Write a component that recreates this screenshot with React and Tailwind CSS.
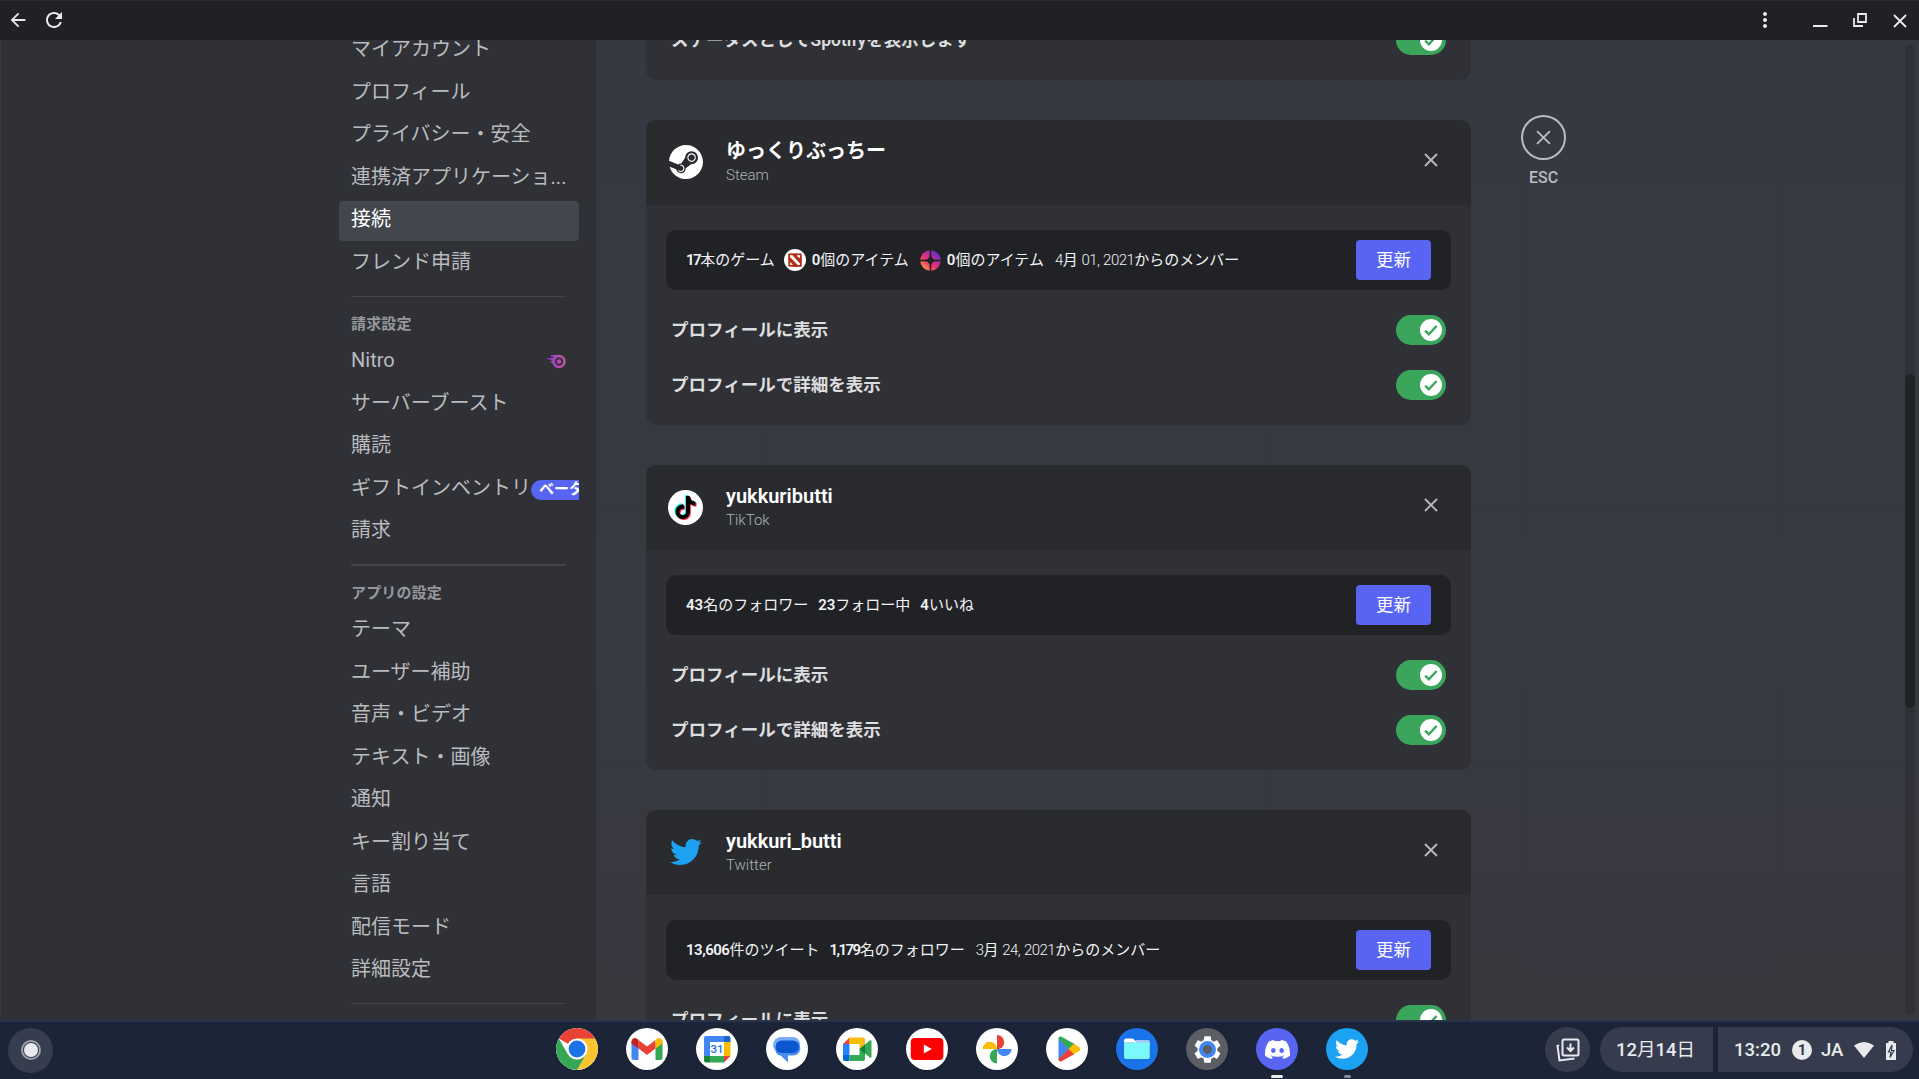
import React from "react";
import { SiSteam, SiTiktok, SiDiscord } from "react-icons/si";
import { FaTwitter } from "react-icons/fa";
import { MdArrowBack, MdRefresh, MdMoreVert, MdSettings } from "react-icons/md";

const account = ["マイアカウント", "プロフィール", "プライバシー・安全", "連携済アプリケーショ...", "接続", "フレンド申請"];
const app = ["テーマ", "ユーザー補助", "音声・ビデオ", "テキスト・画像", "通知", "キー割り当て", "言語", "配信モード", "詳細設定"];

function Item({ children, active, extra }) {
  return (
    <div className={"mb-[2.5px] flex h-10 shrink-0 items-center overflow-hidden rounded pl-[12px] text-[20px] leading-[25px] " + (active ? "bg-[#42464d] text-white" : "text-[#b9bbbe]")}>
      <span className="shrink-0 whitespace-nowrap pb-[3px]">{children}</span>
      {extra}
    </div>
  );
}

function Divider() {
  return <div className="ml-[12px] mr-[13px] mb-[10.5px] mt-[9.5px] h-[1.25px] shrink-0 bg-[#42444a]" />;
}

function Heading({ children }) {
  return <div className="h-[35px] shrink-0 px-[12px] pt-[7px] text-[15px] font-bold leading-[20px] tracking-[0.15px] text-[#96989d]">{children}</div>;
}

function NitroIcon() {
  return (
    <svg className="mb-px ml-auto mr-[13px] h-[15px] w-[19px] shrink-0" viewBox="0 0 19 15">
      <defs>
        <linearGradient id="nitro" x1="0" x2="19" y1="0" y2="0" gradientUnits="userSpaceOnUse"><stop offset="0" stopColor="#7a47c6" /><stop offset=".5" stopColor="#b845c1" /><stop offset="1" stopColor="#ab5d8a" /></linearGradient>
      </defs>
      <g fill="none" stroke="url(#nitro)">
        <circle cx="12" cy="7.500" r="5.500" strokeWidth="2.700" />
        <path d="M4 1.800h8M2 4.800h5.500M3.500 7.700h4" strokeWidth="1.700" />
        <path d="M0 4.810h1.200" strokeWidth="1.500" />
      </g>
      <circle cx="12" cy="7.500" r="2.300" fill="#b845b9" />
    </svg>
  );
}

function Cross({ className }) {
  return (
    <svg className={className} viewBox="0 0 14 14" fill="none" stroke="currentColor" strokeWidth="1.8"><path d="M1 1l12 12M13 1L1 13" /></svg>
  );
}

function Toggle() {
  return (
    <div className="flex h-[30px] w-[50px] items-center justify-end rounded-full bg-[#3ba55c] pr-1">
      <div className="flex h-[22.5px] w-[22.5px] items-center justify-center rounded-full bg-white">
        <svg className="h-[14px] w-[14px]" viewBox="0 0 14 14" fill="none" stroke="#3ba55c" strokeWidth="2.4"><path d="M1.2 7.6l3.600 3.700L12.600 3" /></svg>
      </div>
    </div>
  );
}

function ToggleRow({ label }) {
  return (
    <div className="mb-[25px] flex h-[30px] items-center justify-between pl-[5px] pr-[5px] text-[17.5px] font-semibold text-[#dcddde]">
      <span className="whitespace-nowrap">{label}</span>
      <Toggle />
    </div>
  );
}

function Card({ icon, name, service, children }) {
  return (
    <section className="mb-10 h-[305px] shrink-0 overflow-hidden rounded-[10px] bg-[#303136]">
      <header className="flex h-[85px] items-center bg-[#2a2b2f] pl-[22px] pr-[33px]">
        <div className="mb-[1px] flex h-[35px] w-[35px] items-center justify-center">{icon}</div>
        <div className="ml-[23px] flex grow flex-col pb-[2px]">
          <div className="text-[20px] font-semibold leading-[26px] text-white">{name}</div>
          <div className="text-[15px] font-light leading-[22px] text-[#b0b3b7]">{service}</div>
        </div>
        <Cross className="mb-[5px] h-[14px] w-[14px] text-[#b9bbbe]" />
      </header>
      <div className="px-5 pt-[25px]">
        <div className="mb-[25px] flex h-[60px] items-center rounded-[10px] bg-[#212226] px-5 text-[15px] text-[#f2f3f5]">
          <div className="flex grow items-center gap-[10px] whitespace-nowrap">{children}</div>
          <button className="h-10 w-[75px] rounded bg-[#5865f2] text-[17.5px] text-white">更新</button>
        </div>
        <ToggleRow label="プロフィールに表示" />
        <ToggleRow label="プロフィールで詳細を表示" />
      </div>
    </section>
  );
}

function Stat({ n, children, icon, fit = "" }) {
  return (
    <span className="flex items-center">
      {icon}
      <b className={"font-semibold " + fit}>{n}</b>
      {children}
    </span>
  );
}

function Since({ month, date }) {
  return (
    <span className="ml-px">
      <span className="font-light tracking-[-0.5px]">{month}</span>月<span className="font-light tracking-[-0.5px] [word-spacing:0.5px]">{" " + date}</span>からのメンバー
    </span>
  );
}

function DotaIcon() {
  return (
    <svg className="-ml-px mr-[6px] h-[22px] w-[22px]" viewBox="0 0 22 22">
      <circle cx="11" cy="11" r="11" fill="#fff" />
      <path d="M4.200 4.600l6.600-.400 6.800.200.300 6.600-.200 6.700-6.700.200-6.600-.300-.200-6.600z" fill="#b0301c" />
      <path d="M6 6l2.400.200 7.600 8.200-.200 1.600-2 .100L6.200 8.200zM13.200 6l2.800.200v2.900l-2.600-1.300zM6.200 12.800l2.700 3.100-2.700.200z" fill="#fff" />
    </svg>
  );
}

function TfIcon() {
  return (
    <svg className="mr-[6px] ml-px h-[21px] w-[21px]" viewBox="0 0 21 21">
      <defs>
        <linearGradient id="tf" x1=".9" y1=".05" x2=".1" y2=".95"><stop offset="0" stopColor="#4a2fd8" /><stop offset=".45" stopColor="#d62a8c" /><stop offset=".65" stopColor="#f03e6c" /><stop offset="1" stopColor="#f8a83f" /></linearGradient>
      </defs>
      <circle cx="10.500" cy="10.500" r="10.300" fill="url(#tf)" />
      <path d="M9.800 0h1.400l.3 7 2.500 2.500 7 .3v1.400l-7 .3-2.500 2.500-.3 7H9.800l-.3-7L7 11.500l-7-.3V9.800l7-.3L9.500 7z" fill="#212226" />
    </svg>
  );
}

function TikTok() {
  return (
    <div className="grid h-[35px] w-[35px] place-items-center rounded-full bg-white">
      <SiTiktok className="col-start-1 row-start-1 mr-[2px] mb-[1px] h-[23px] w-[23px] text-[#25f4ee]" />
      <SiTiktok className="col-start-1 row-start-1 ml-[2px] mt-[2px] h-[23px] w-[23px] text-[#fe2c55]" />
      <SiTiktok className="col-start-1 row-start-1 h-[23px] w-[23px] text-black" />
    </div>
  );
}

function Disc({ bg = "bg-white", children, mark }) {
  return (
    <div className="flex w-[42px] flex-col items-center pt-[8px]">
      <div className={"flex h-[42px] w-[42px] shrink-0 items-center justify-center overflow-hidden rounded-full shadow " + bg}>{children}</div>
      {mark && <div className={"mt-[5px] h-[3px] shrink-0 rounded-full " + mark} />}
    </div>
  );
}

const S = ({ children }) => <svg className="h-[42px] w-[42px]" viewBox="0 0 42 42">{children}</svg>;

function Dock() {
  return (
    <div className="flex gap-7">
      <Disc><S>
        <path d="M21 21L2.800 10.500A21 21 0 0 1 39.200 10.500z" fill="#ea4335" />
        <path d="M21 10.500H39.200A21 21 0 0 1 21 42L30.100 26.200z" fill="#fbc430" />
        <path d="M2.800 10.500A21 21 0 0 0 21 42L30.100 26.200 11.900 26.200z" fill="#34a853" />
        <circle cx="21" cy="21" r="10.500" fill="#fff" /><circle cx="21" cy="21" r="8.400" fill="#1a73e8" />
      </S></Disc>
      <Disc><S>
        <path d="M5.500 13v17a2 2 0 0 0 2 2h5V17z" fill="#4285f4" />
        <path d="M36.500 13v17a2 2 0 0 1-2 2h-5V17z" fill="#34a853" />
        <path d="M12.500 12l8.500 6.500 8.500-6.500v8.500L21 27l-8.500-6.500z" fill="#ea4335" />
        <path d="M5.500 14v1.500l7 5V12l-1.500-1.200c-2.400-1.700-5.500-.1-5.500 3.200z" fill="#c5221f" />
        <path d="M36.500 14v1.500l-7 5V12l1.500-1.200c2.400-1.700 5.500-.1 5.500 3.200z" fill="#fbbc04" />
      </S></Disc>
      <Disc><S>
        <rect x="14" y="14" width="14" height="14" fill="#fff" />
        <path d="M8 10a2 2 0 0 1 2-2h18v6H14v14H8z" fill="#4285f4" />
        <path d="M28 8h4.500a2 2 0 0 1 2 2v4H28z" fill="#1967d2" />
        <path d="M28 14h6.500v14H28z" fill="#fbbc04" />
        <path d="M14 28h14v6.500H14z" fill="#34a853" />
        <path d="M8 28h6v6.500h-4a2 2 0 0 1-2-2z" fill="#188038" />
        <path d="M28 28h6.500L28 34.500z" fill="#ea4335" />
        <text x="21" y="25.300" textAnchor="middle" fontFamily="Roboto" fontWeight="500" fontSize="11.500" fill="#1a73e8">31</text>
      </S></Disc>
      <Disc><S>
        <path d="M15 9h12a7 7 0 0 1 6.800 9L30 25H15A8 8 0 0 1 15 9z" fill="#7baaf7" />
        <path d="M14 13h13a7.300 7.300 0 0 1 7.300 7c0 4-3 7.500-7.300 7.500h-5v7l-7.500-7C10.500 27 9.500 24 9.500 21z" fill="#4c8df6" />
        <rect x="9.500" y="12.500" width="23.500" height="12.500" rx="6.250" fill="#0b57d0" />
      </S></Disc>
      <Disc><S>
        <path d="M7 16l6.500-6.500V16z" fill="#ea4335" />
        <path d="M13.500 9.500H27a2 2 0 0 1 2 2V18l-5.500 3v-5h-10z" fill="#fbbc04" />
        <path d="M7 16h6.500v11H7z" fill="#2684fc" />
        <path d="M7 27h6.500v6H9a2 2 0 0 1-2-2z" fill="#0066da" />
        <path d="M13.500 27h10v-6l5.500 2v8a2 2 0 0 1-2 2H13.500z" fill="#34a853" />
        <path d="M23.500 21l10.300-8.500c.8-.6 1.700-.2 1.700.8v15.500c0 1-.900 1.400-1.700.8z" fill="#34a853" />
        <path d="M23.500 21l5.500-4.600V26z" fill="#188038" />
      </S></Disc>
      <Disc><S>
        <rect x="4.800" y="10" width="32.600" height="22" rx="4" fill="#f00" /><path d="M17.800 16.500v9l8-4.500z" fill="#fff" />
      </S></Disc>
      <Disc><S>
        <path d="M21 7a7.200 7.200 0 0 1 0 14.400z" fill="#ea4335" />
        <path d="M35.500 21a7.200 7.200 0 0 1-14.500 0z" fill="#4285f4" />
        <path d="M21 35.500a7.200 7.200 0 0 1 0-14.500z" fill="#34a853" />
        <path d="M6.500 21a7.200 7.200 0 0 1 14.500 0z" fill="#fbbc04" />
      </S></Disc>
      <Disc><S>
        <path d="M12.500 10v22L23 21z" fill="#4285f4" />
        <path d="M12.500 11c0-2.500 2-3 3.500-2l12.500 7-5.500 5.500z" fill="#34a853" />
        <path d="M12.500 31c0 2.500 2 3 3.500 2l12.500-7-5.500-5.500z" fill="#ea4335" />
        <path d="M28 15.700l5 3.200c1.600 1 1.600 3.200 0 4.200l-5 3.200L22.500 21z" fill="#fbbc04" />
      </S></Disc>
      <Disc bg="bg-[#1a73e8]"><S>
        <path d="M20 12h12a1.800 1.800 0 0 1 1.800 1.800V18H17z" fill="#a9c7f6" />
        <path d="M8 14.500h25.800V29a2 2 0 0 1-2 2H10a2 2 0 0 1-2-2z" fill="#7bf8fa" />
        <path d="M8 12.500a2 2 0 0 1 2-2h7l4 4H8z" fill="#fff" />
      </S></Disc>
      <Disc bg="bg-[#5b5e62]">
        <div className="grid place-items-center">
          <MdSettings className="col-start-1 row-start-1 h-[33px] w-[33px] text-white" />
          <span className="col-start-1 row-start-1 h-[17px] w-[17px] rounded-full border-4 border-[#4285f4] bg-[#5b5e62]" />
        </div>
      </Disc>
      <Disc bg="bg-[#5865f2]" mark="w-3 bg-[#e8eaed]"><SiDiscord className="h-[25px] w-[25px] text-white" /></Disc>
      <Disc bg="bg-[#1da1f2]" mark="w-[7px] bg-[#868b96]"><FaTwitter className="h-6 w-6 text-white" /></Disc>
    </div>
  );
}

export default function App() {
  return (
    <div className="flex h-[1079px] w-[1919px] flex-col overflow-hidden bg-[#36393f] font-['Roboto','Noto_Sans_CJK_JP',sans-serif]" lang="ja">
      <div className="flex h-10 shrink-0 items-center border-t border-[#2b2c30] bg-[#202124] pb-px pl-[6.5px] pr-[12px] text-[#e8eaed]">
        <MdArrowBack className="h-[22px] w-[22px]" />
        <MdRefresh className="ml-[13px] h-[24px] w-[24px]" />
        <MdMoreVert className="ml-auto h-6 w-6" />
        <svg className="ml-[33px] h-5 w-5" viewBox="0 0 20 20"><path d="M3 16h14.500" stroke="currentColor" strokeWidth="2" /></svg>
        <svg className="ml-5 h-5 w-5" viewBox="0 0 20 20" fill="none" stroke="currentColor" strokeWidth="1.800"><path d="M8 4h8v8H8zM4 8v8h9" /></svg>
        <Cross className="ml-[23px] mt-[2px] h-[14px] w-[14px]" />
      </div>

      <main className="flex min-h-0 grow overflow-hidden">
        <nav className="flex w-[596px] shrink-0 justify-end border-l border-[#36383d] bg-[#303136] pr-[17px]">
          <div className="-mt-[9px] flex w-[240px] flex-col">
            {account.map((t) => <Item key={t} active={t === "接続"}>{t}</Item>)}
            <Divider />
            <Heading>請求設定</Heading>
            <Item extra={<NitroIcon />}>Nitro</Item>
            <Item>サーバーブースト</Item>
            <Item>購読</Item>
            <Item extra={<span className="h-5 shrink-0 rounded-full bg-[#5865f2] px-2 text-[15px] font-bold leading-[18px] text-white">ベータ</span>}>ギフトインベントリ</Item>
            <Item>請求</Item>
            <Divider />
            <Heading>アプリの設定</Heading>
            {app.map((t) => <Item key={t}>{t}</Item>)}
            <Divider />
          </div>
        </nav>

        <div className="flex grow bg-linear-to-b from-[#363942] to-[#38393f] pl-[50px]">
          <div className="flex w-[825px] shrink-0 flex-col">
            <section className="-mt-[15px] mb-10 h-[55px] shrink-0 rounded-b-[10px] bg-[#303136] px-5">
              <ToggleRow label="ステータスとしてSpotifyを表示します" />
            </section>
            <Card icon={<SiSteam className="h-[34px] w-[34px] text-white" />} name="ゆっくりぶっちー" service="Steam">
              <Stat n="17" fit="tracking-[-1.5px]">本のゲーム</Stat>
              <Stat n="0" icon={<DotaIcon />}>個のアイテム</Stat>
              <Stat n="0" icon={<TfIcon />}>個のアイテム</Stat>
              <Since month="4" date="01, 2021" />
            </Card>
            <Card icon={<TikTok />} name="yukkuributti" service="TikTok">
              <Stat n="43">名のフォロワー</Stat>
              <Stat n="23">フォロー中</Stat>
              <Stat n="4">いいね</Stat>
            </Card>
            <Card icon={<FaTwitter className="h-8 w-8 text-[#1da1f2]" />} name="yukkuri_butti" service="Twitter">
              <Stat n="13,606" fit="tracking-[-0.5px]">件のツイート</Stat>
              <Stat n="1,179" fit="tracking-[-1.5px]">名のフォロワー</Stat>
              <Since month="3" date="24, 2021" />
            </Card>
          </div>
          <div className="ml-[50px] flex w-[45px] flex-col items-center pt-[75px] text-[#b9bbbe]">
            <div className="flex h-[45px] w-[45px] shrink-0 items-center justify-center rounded-full border-2 border-[#b9bbbe]"><Cross className="h-[15px] w-[15px]" /></div>
            <div className="mt-[7px] text-[16px] font-medium leading-[21px]">ESC</div>
          </div>
          <div className="ml-auto mr-1 mt-[5px] h-[970px] w-[10px] rounded-full bg-[#2f3136] pt-[329px]">
            <div className="h-[334px] rounded-full bg-[#202225]" />
          </div>
        </div>
      </main>

      <footer className="flex h-[59px] shrink-0 justify-between border-t-2 border-[#273449] bg-[#1c2438] pl-2 pr-[6px] font-medium text-[#e8eaed]">
        <div className="flex w-[548px] shrink-0 pt-[5.5px]">
          <div className="flex h-[45px] w-[45px] items-center justify-center rounded-full bg-[#363d4f]">
            <div className="flex h-[20px] w-[20px] items-center justify-center rounded-full border-2 border-[#9ca0aa]"><div className="h-[14px] w-[14px] rounded-full bg-[#e8eaed]" /></div>
          </div>
        </div>
        <div className="-mt-[2px] grow"><Dock /></div>
        <div className="flex pt-[5px] text-[18.500px]">
          <div className="mr-[10px] flex h-[45px] w-[45px] items-center justify-center rounded-full bg-[#363c4e]">
            <svg className="h-6 w-6" viewBox="0 0 24 24" fill="none" stroke="currentColor" strokeWidth="2"><rect x="6.500" y="1.500" width="16" height="16" rx="1.500" /><path d="M3 7l-1.500 1 2 14.500 15-2" /><path d="M14.500 5.500v7M11 9.500l3.500 3.500L18 9.500" /></svg>
          </div>
          <div className="mr-[5px] flex h-[45px] w-[113px] items-center justify-center rounded-l-full rounded-r bg-[#363c4e] pr-[2px] pt-[2px]">
            <span>12<span className="font-normal">月</span>14<span className="font-normal">日</span></span>
          </div>
          <div className="flex h-[45px] w-[195px] items-center rounded-l rounded-r-full bg-[#363c4e] pl-4 pt-px">
            <span className="w-[58px] pt-px">13:20</span>
            <span className="flex h-5 w-5 items-center justify-center rounded-full bg-[#e8eaed] text-[15px] font-bold text-[#363c4e]">1</span>
            <span className="ml-[9px] pt-px">JA</span>
            <svg className="ml-[11px] h-4 w-5" viewBox="0 0 20 16"><path d="M0 3.500Q10-3.500 20 3.500L10 16z" fill="currentColor" /></svg>
            <svg className="ml-[11px] h-[19px] w-[12px]" viewBox="0 0 12 19"><path d="M1 2h2.500V0h5v2H11v17H1z" fill="currentColor" /><path d="M7 4L3.500 11H6l-1 5.500L9 9.500H6.500z" fill="none" stroke="#363c4e" strokeWidth="1.200" /></svg>
          </div>
        </div>
      </footer>
    </div>
  );
}
